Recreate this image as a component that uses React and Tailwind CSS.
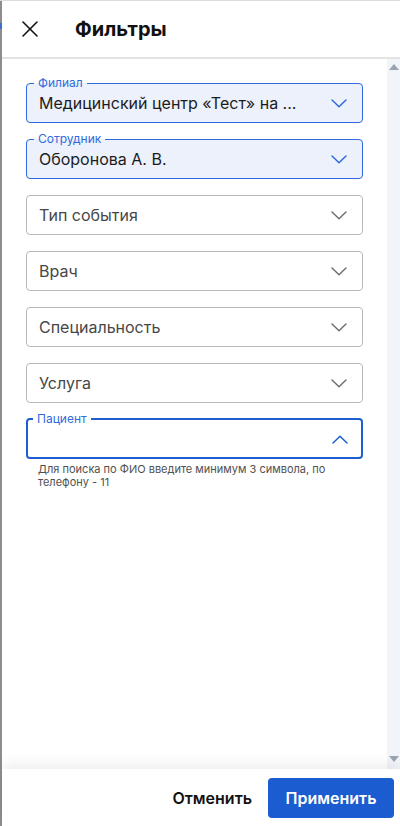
import { X } from 'lucide-react'

const font = { fontFamily: 'Inter, "Noto Sans", sans-serif' }

function Chevron({ up, className }) {
  return (
    <svg width="16" height="9" viewBox="0 0 16 9" fill="none" className={className}>
      <path
        d={up ? 'M1 8 L8 1.2 L15 8' : 'M1 1 L8 7.8 L15 1'}
        stroke="currentColor"
        strokeWidth="1.5"
        strokeLinecap="round"
        strokeLinejoin="round"
      />
    </svg>
  )
}

function FilledSelect({ label, value }) {
  return (
    <fieldset className="h-[47px] rounded border border-[#2f6bdc] bg-[#ecf1fc] px-3 pb-[6px]">
      <legend className="ml-[-5px] px-1 text-xs leading-[14px] text-[#2f6bdc]">{label}</legend>
      <div className="flex h-[26px] items-center justify-between">
        <span className="truncate text-base leading-5 text-[#1c1c1c]">{value}</span>
        <Chevron className="mr-[3px] shrink-0 text-[#2f6bdc]" />
      </div>
    </fieldset>
  )
}

function EmptySelect({ placeholder }) {
  return (
    <div className="mt-[7px] flex h-10 items-center justify-between rounded border border-[#b9b9b9] bg-white pl-3 pr-[15px]">
      <span className="text-base leading-5 text-[#474747]">{placeholder}</span>
      <Chevron className="shrink-0 text-[#707070]" />
    </div>
  )
}

export default function App() {
  return (
    <div className="flex h-[826px] w-[400px] overflow-hidden border-t border-[#dcdcdc] bg-white" style={font}>
      {/* backdrop edge */}
      <div className="flex w-[2px] shrink-0 flex-col bg-[#8d8d8d]">
        <div className="mt-[22px] h-[6px] bg-[#3b6fc9]" />
      </div>

      <div className="flex min-w-0 flex-1 flex-col">
        {/* Header */}
        <div className="flex h-[58px] shrink-0 items-center gap-[31px] border-b-2 border-[#e3e3e3] pl-[14px]">
          <X size={28} strokeWidth={1.35} className="text-[#111]" />
          <h1 className="text-xl font-bold text-[#111]">Фильтры</h1>
        </div>

        {/* Body */}
        <div className="flex min-h-0 flex-1">
          <div className="flex flex-1 flex-col gap-[9px] px-6 pt-[17px]">
            <FilledSelect label="Филиал" value="Медицинский центр «Тест» на ..." />
            <FilledSelect label="Сотрудник" value="Оборонова А. В." />
            <EmptySelect placeholder="Тип события" />
            <EmptySelect placeholder="Врач" />
            <EmptySelect placeholder="Специальность" />
            <EmptySelect placeholder="Услуга" />
            <div>
              <fieldset className="h-[47px] rounded border-2 border-[#1d5fd3] px-[11px] pb-[6px]">
                <legend className="ml-[-6px] px-1 text-xs leading-[14px] text-[#2f6bdc]">Пациент</legend>
                <div className="flex h-[26px] items-center justify-end">
                  <Chevron up className="mr-[2px] text-[#1d5fd3]" />
                </div>
              </fieldset>
              <p className="mt-[4px] px-3 text-[11px] leading-[13px] text-[#505050]">
                Для поиска по ФИО введите минимум 3 символа, по телефону - 11
              </p>
            </div>
          </div>

          {/* Scrollbar */}
          <div className="flex w-[13px] shrink-0 flex-col items-center justify-between bg-[#f1f4f9] pb-[7px] pt-[5px]">
            <div className="h-0 w-0 border-x-[5px] border-b-[6px] border-x-transparent border-b-[#9aa3b2]" />
            <div className="h-0 w-0 border-x-[5px] border-t-[6px] border-x-transparent border-t-[#9aa3b2]" />
          </div>
        </div>

        {/* Footer */}
        <div className="relative z-10 flex h-[57px] shrink-0 items-center justify-end gap-4 bg-white pr-[6px] shadow-[0_-5px_12px_rgba(0,0,0,0.07)]">
          <button className="text-base font-semibold text-[#111]">Отменить</button>
          <button className="h-10 w-[126px] rounded bg-[#1b5dd0] text-base font-semibold text-white">
            Применить
          </button>
        </div>
      </div>
    </div>
  )
}
